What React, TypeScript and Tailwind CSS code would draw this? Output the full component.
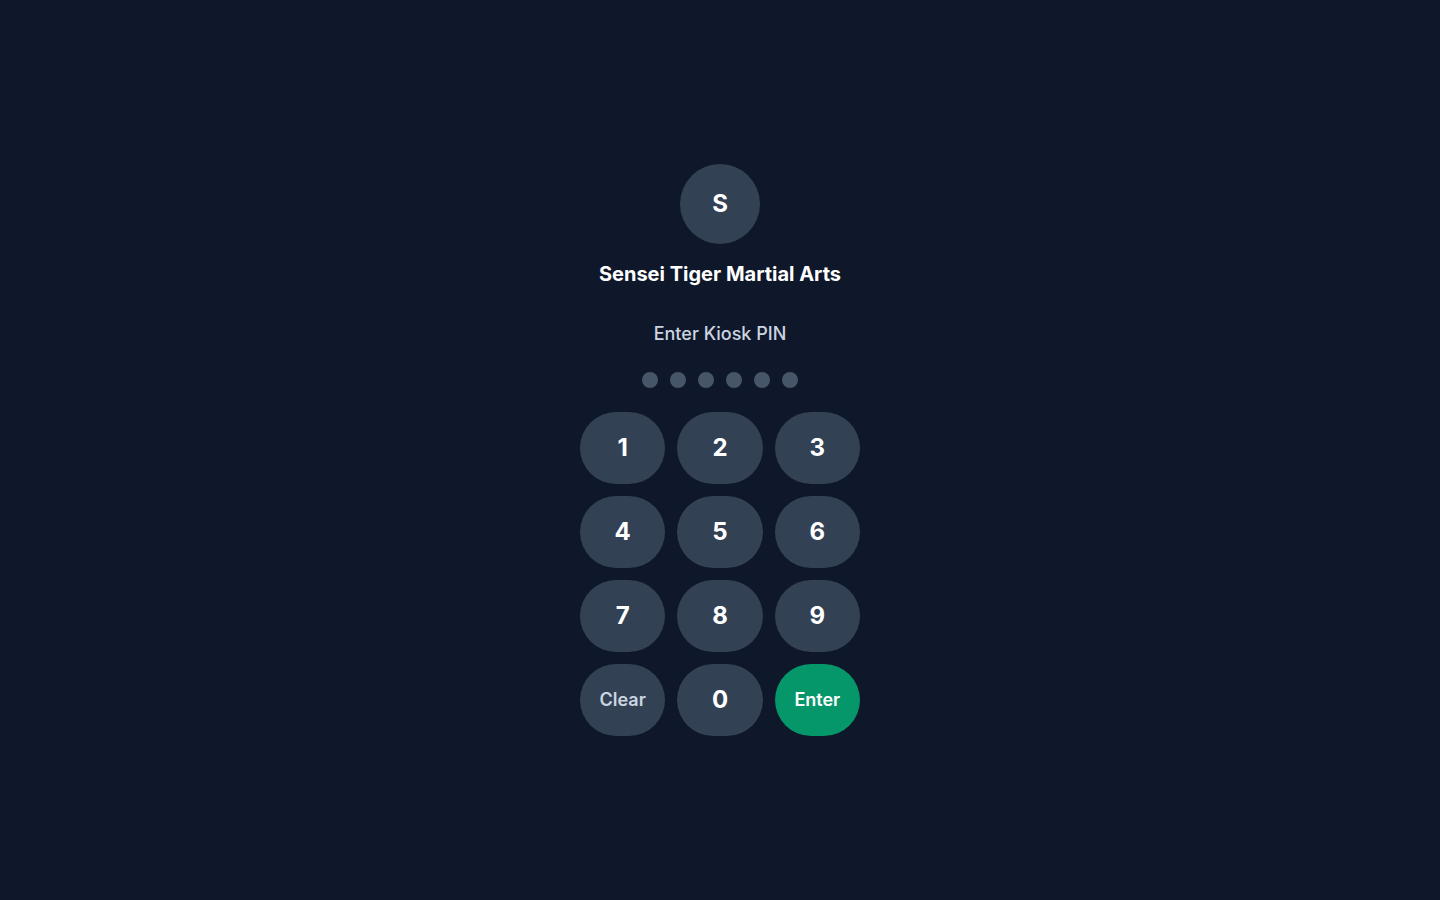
import React, { useState } from "react";

const KEYS = ["1", "2", "3", "4", "5", "6", "7", "8", "9"];

const App: React.FC = () => {
  const [pin, setPin] = useState<string>("");

  const press = (k: string) => {
    if (pin.length < 6) setPin(pin + k);
  };

  return (
    <div
      className="min-h-screen w-full bg-[#0f172a] flex items-center justify-center"
      style={{ fontFamily: "Inter, 'Noto Sans', sans-serif" }}
    >
      <div className="flex flex-col items-center">
        <div className="w-20 h-20 rounded-full bg-[#334155] flex items-center justify-center text-2xl font-bold text-white mb-4">
          S
        </div>
        <h1 className="text-xl leading-7 font-bold text-white mb-8">
          Sensei Tiger Martial Arts
        </h1>
        <p className="text-lg leading-7 font-medium text-[#cbd5e1] mb-6">
          Enter Kiosk PIN
        </p>

        {/* PIN dots */}
        <div className="flex gap-3 mb-6">
          {Array.from({ length: 6 }).map((_, i) => (
            <div
              key={i}
              className={
                i < pin.length
                  ? "w-4 h-4 rounded-full bg-white"
                  : "w-4 h-4 rounded-full bg-[#475569]"
              }
            />
          ))}
        </div>

        {/* Keypad */}
        <div className="grid grid-cols-3 gap-3 w-[280px]">
          {KEYS.map((k) => (
            <button
              key={k}
              onClick={() => press(k)}
              className="h-[72px] rounded-full bg-[#334155] text-white text-2xl font-bold flex items-center justify-center"
            >
              {k}
            </button>
          ))}
          <button
            onClick={() => setPin("")}
            className="h-[72px] rounded-full bg-[#334155] text-[#cbd5e1] text-lg font-semibold flex items-center justify-center"
          >
            Clear
          </button>
          <button
            onClick={() => press("0")}
            className="h-[72px] rounded-full bg-[#334155] text-white text-2xl font-bold flex items-center justify-center"
          >
            0
          </button>
          <button className="h-[72px] rounded-full bg-[#059669] text-white text-lg font-semibold flex items-center justify-center">
            Enter
          </button>
        </div>
      </div>
    </div>
  );
};

export default App;
